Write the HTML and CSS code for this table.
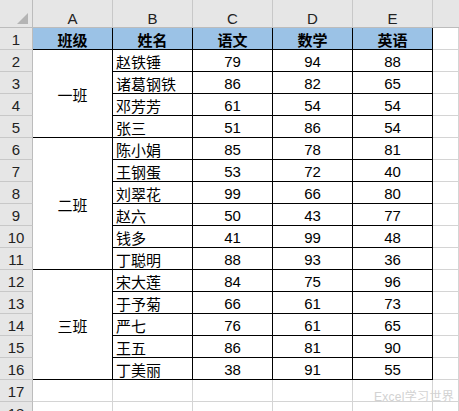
FILE: index.html
```html
<!DOCTYPE html>
<html lang="zh-CN">
<head>
<meta charset="utf-8">
<title>Sheet</title>
<link rel="stylesheet" href="styles.css">
</head>
<body>
<div class="sheet">
  <div class="corner"><span class="tri"></span></div>
  <div class="ch">A</div><div class="ch">B</div><div class="ch">C</div><div class="ch">D</div><div class="ch">E</div><div class="ch ch-last"></div>

  <div class="rh">1</div>
  <div class="c hd">班级</div><div class="c hd">姓名</div><div class="c hd">语文</div><div class="c hd">数学</div><div class="c hd">英语</div><div class="g"></div>

  <div class="rh">2</div>
  <div class="c cls span4">一班</div><div class="c name">赵铁锤</div><div class="c num">79</div><div class="c num">94</div><div class="c num">88</div><div class="g"></div>
  <div class="rh">3</div>
  <div class="c name">诸葛钢铁</div><div class="c num">86</div><div class="c num">82</div><div class="c num">65</div><div class="g"></div>
  <div class="rh">4</div>
  <div class="c name">邓芳芳</div><div class="c num">61</div><div class="c num">54</div><div class="c num">54</div><div class="g"></div>
  <div class="rh">5</div>
  <div class="c name">张三</div><div class="c num">51</div><div class="c num">86</div><div class="c num">54</div><div class="g"></div>

  <div class="rh">6</div>
  <div class="c cls span6">二班</div><div class="c name">陈小娟</div><div class="c num">85</div><div class="c num">78</div><div class="c num">81</div><div class="g"></div>
  <div class="rh">7</div>
  <div class="c name">王钢蛋</div><div class="c num">53</div><div class="c num">72</div><div class="c num">40</div><div class="g"></div>
  <div class="rh">8</div>
  <div class="c name">刘翠花</div><div class="c num">99</div><div class="c num">66</div><div class="c num">80</div><div class="g"></div>
  <div class="rh">9</div>
  <div class="c name">赵六</div><div class="c num">50</div><div class="c num">43</div><div class="c num">77</div><div class="g"></div>
  <div class="rh">10</div>
  <div class="c name">钱多</div><div class="c num">41</div><div class="c num">99</div><div class="c num">48</div><div class="g"></div>
  <div class="rh">11</div>
  <div class="c name">丁聪明</div><div class="c num">88</div><div class="c num">93</div><div class="c num">36</div><div class="g"></div>

  <div class="rh">12</div>
  <div class="c cls span5">三班</div><div class="c name">宋大莲</div><div class="c num">84</div><div class="c num">75</div><div class="c num">96</div><div class="g"></div>
  <div class="rh">13</div>
  <div class="c name">于予菊</div><div class="c num">66</div><div class="c num">61</div><div class="c num">73</div><div class="g"></div>
  <div class="rh">14</div>
  <div class="c name">严七</div><div class="c num">76</div><div class="c num">61</div><div class="c num">65</div><div class="g"></div>
  <div class="rh">15</div>
  <div class="c name">王五</div><div class="c num">86</div><div class="c num">81</div><div class="c num">90</div><div class="g"></div>
  <div class="rh">16</div>
  <div class="c name">丁美丽</div><div class="c num">38</div><div class="c num">91</div><div class="c num">55</div><div class="g"></div>

  <div class="rh">17</div>
  <div class="g"></div><div class="g"></div><div class="g"></div><div class="g"></div><div class="g"></div><div class="g"></div>
  <div class="rh">18</div>
  <div class="g"></div><div class="g"></div><div class="g"></div><div class="g"></div><div class="g"></div><div class="g"></div>

  <div class="mark">Excel学习世界</div>
</div>
</body>
</html>
```
FILE: styles.css
```css
* { box-sizing: border-box; }
html, body {
  margin: 0;
  padding: 0;
  background: #ffffff;
  overflow: hidden;
}
.sheet {
  position: relative;
  width: 459px;
  height: 411px;
  overflow: hidden;
  display: grid;
  grid-template-columns: 33px repeat(5, 80px) 1fr;
  grid-template-rows: 28px;
  grid-auto-rows: 22px;
  font-family: "Liberation Sans", "Noto Sans CJK SC", sans-serif;
  font-size: 15px;
  color: #000;
}
.corner {
  position: relative;
  background: #e6e6e6;
  border-right: 1px solid #bcbcbc;
  border-bottom: 1px solid #bcbcbc;
}
.tri {
  position: absolute;
  right: 4px;
  bottom: 3px;
  width: 0;
  height: 0;
  border-left: 11px solid transparent;
  border-bottom: 11px solid #b4b4b4;
}
.ch {
  background: #e6e6e6;
  border-right: 1px solid #c8c8c8;
  border-bottom: 1px solid #bcbcbc;
  display: flex;
  align-items: center;
  justify-content: center;
  padding-top: 10px;
  color: #222;
  font-size: 15px;
}
.ch-last { border-right: none; }
.rh {
  background: #e6e6e6;
  border-right: 1px solid #bcbcbc;
  border-bottom: 1px solid #c8c8c8;
  display: flex;
  align-items: center;
  justify-content: center;
  color: #222;
  padding-top: 1px;
}
.c {
  border-right: 1px solid #000;
  border-bottom: 1px solid #000;
  display: flex;
  align-items: center;
  justify-content: center;
  white-space: nowrap;
  padding-top: 1px;
}
.hd {
  background: #9bc2e6;
  font-weight: bold;
}
.name {
  justify-content: flex-start;
  padding-left: 3px;
}
.cls { padding-top: 2px; }
.span4 { grid-row: span 4; }
.span5 { grid-row: span 5; }
.span6 { grid-row: span 6; }
.g {
  border-right: 1px solid #d4d4d4;
  border-bottom: 1px solid #d4d4d4;
}
.mark {
  position: absolute;
  right: 5px;
  bottom: 7px;
  font-family: "Liberation Sans", "Noto Sans CJK SC", sans-serif;
  font-size: 12px;
  color: #d2d2d2;
  letter-spacing: 0.3px;
}
```
